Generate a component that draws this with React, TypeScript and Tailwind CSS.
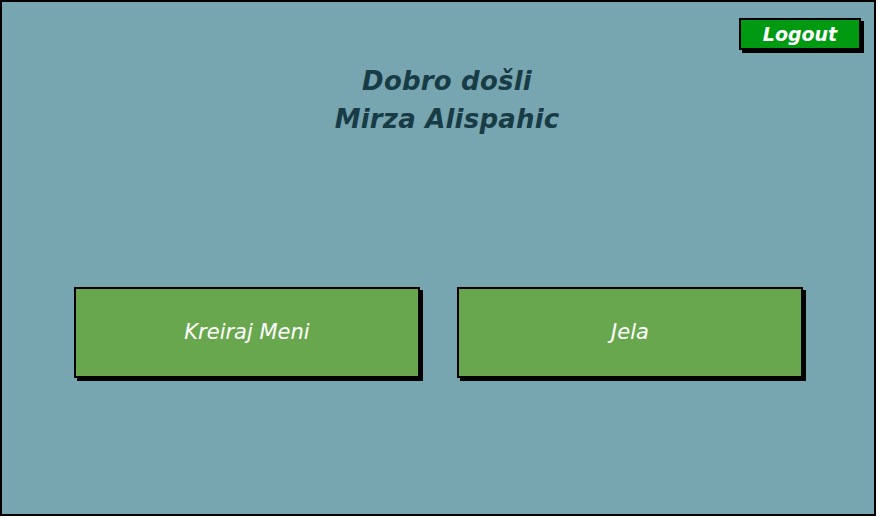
import React from "react";

export default function App() {
  return (
    <div className="w-[878px] h-[518px] bg-white">
      <div
        className="w-[876px] h-[516px] border-2 border-black bg-[#77a5b0] flex flex-col"
        style={{ fontFamily: "'DejaVu Sans', Verdana, sans-serif" }}
      >
        <div className="flex justify-end pt-[16px] pr-[13px]">
          <button className="w-[122px] h-[32px] bg-[#009a12] border-2 border-black shadow-[3px_3px_0_#000] text-white italic font-bold text-[19px] leading-none flex items-center justify-center">
            Logout
          </button>
        </div>
        <div className="mt-[12px] flex flex-col items-center text-[#173c46] italic font-bold text-[26px] leading-[38px] pl-[18px] tracking-[0.2px]">
          <div>Dobro došli</div>
          <div>Mirza Alispahic</div>
        </div>
        <div className="mt-[149px] flex gap-[37px] pl-[72px]">
          <button className="w-[346px] h-[91px] bg-[#69a74e] border-2 border-black shadow-[3px_3px_0_#000] text-white italic text-[21px]">
            Kreiraj Meni
          </button>
          <button className="w-[346px] h-[91px] bg-[#69a74e] border-2 border-black shadow-[3px_3px_0_#000] text-white italic text-[21px]">
            Jela
          </button>
        </div>
      </div>
    </div>
  );
}
